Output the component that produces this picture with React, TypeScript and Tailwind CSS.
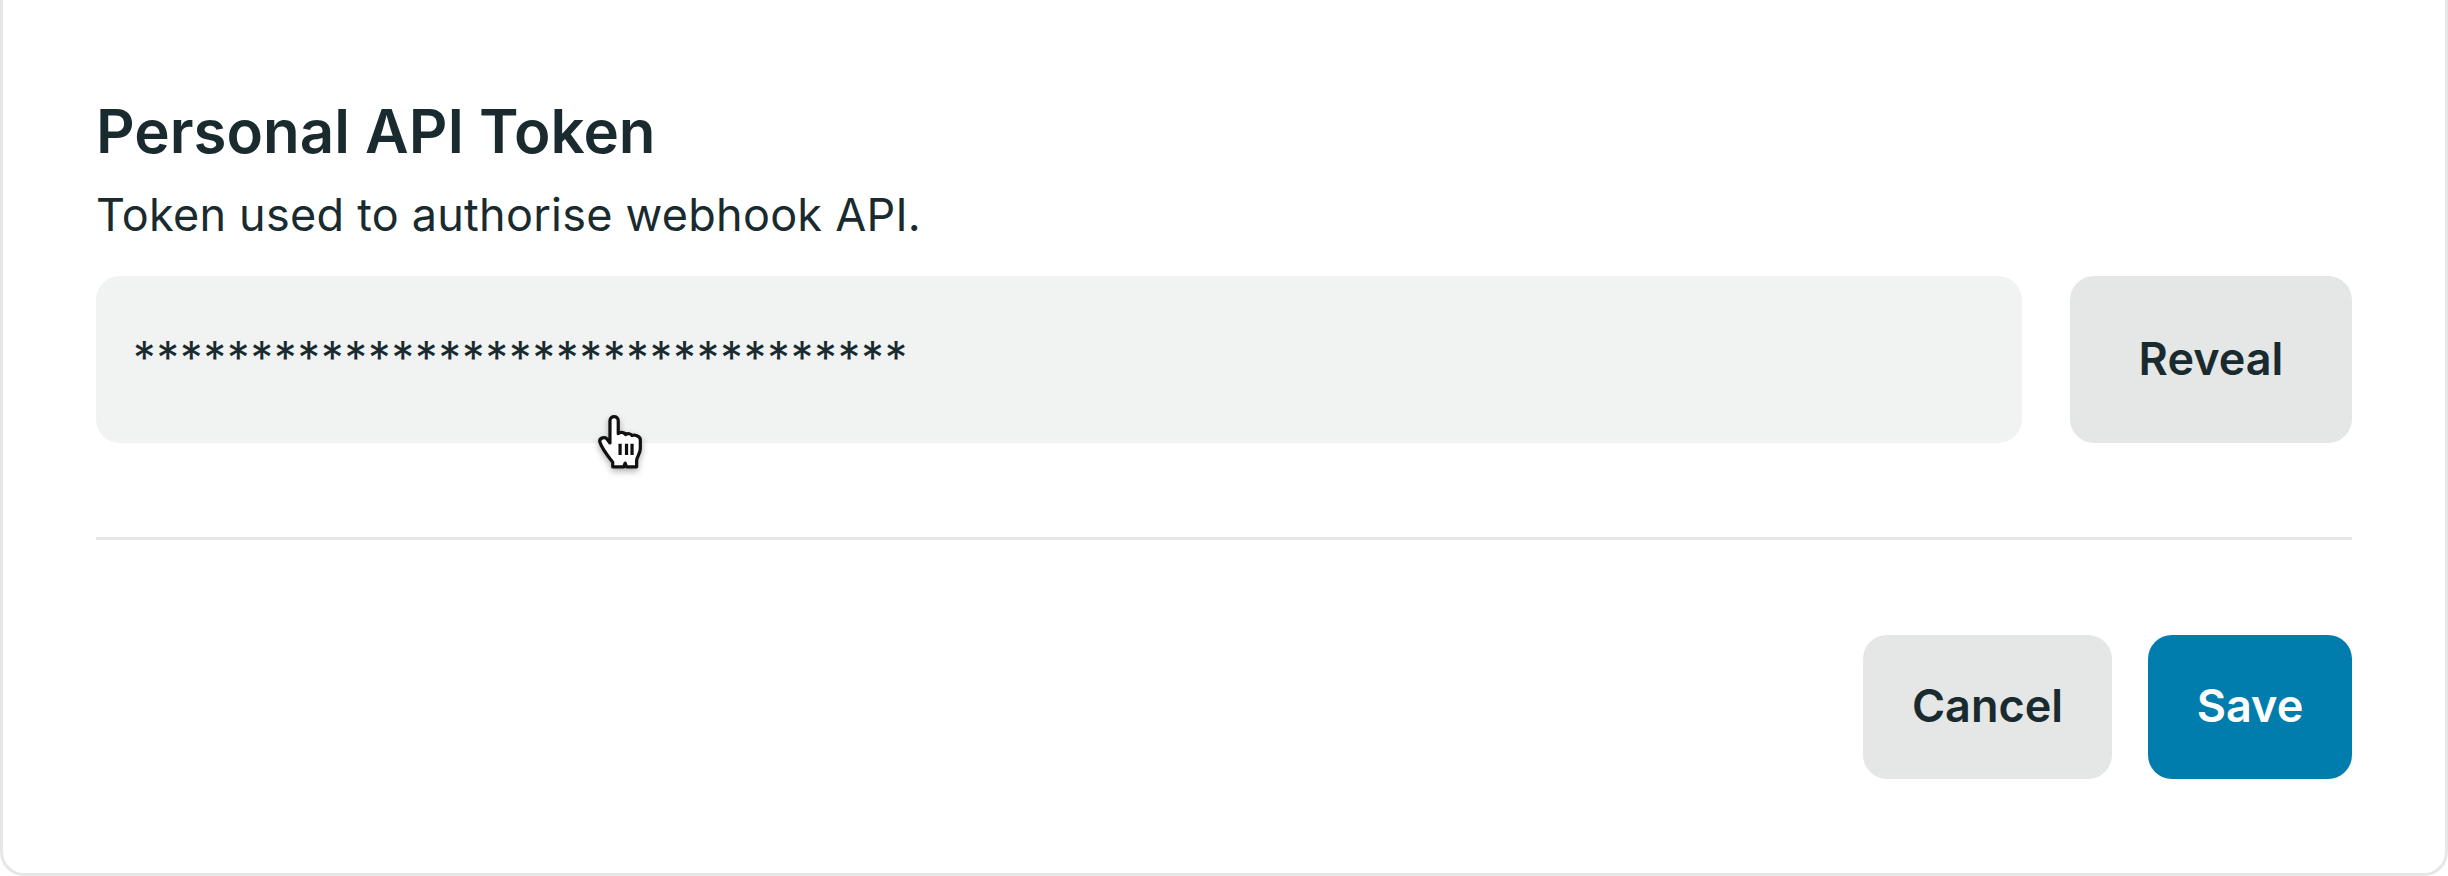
const stars = "*".repeat(33);

function HandCursor() {
  return (
    <svg className="absolute left-[598px] top-[411px] drop-shadow-[0_3px_3px_rgba(0,0,0,0.3)]" width="46" height="62" viewBox="0 0 50 62">
      <path
        d="M13 8c0-6 9-6 9 0v14c2-2 6-2 8 1 2-2 6-1 7 1 3-1 8 0 9 4v10c0 6-4 9-4 13v7H31l-1.5-4-1.5 4H16v-5C12 48 4 38 2 31c-1-5 6-6 8-3l3 4Z"
        fill="#fff"
        stroke="#111"
        strokeWidth="3.5"
        strokeLinejoin="round"
      />
      <path d="M24 33v12M31 33v12M37 33v12" stroke="#111" strokeWidth="3.5" />
    </svg>
  );
}

export default function App() {
  return (
    <div className="relative h-[876px] w-[2448px] overflow-hidden bg-white font-['Inter',sans-serif] text-[#1a2b2f]">
      <div className="flex h-[876px] flex-col rounded-b-[24px] border-x-[3px] border-b-[3px] border-[#e5e7e7] px-[93px] pt-[96px]">
        <h1 className="text-[60px] leading-[70px] font-semibold">Personal API Token</h1>
        <p className="mt-[24px] text-[45px] leading-[50px] tracking-[0.24px]">Token used to authorise webhook API.</p>
        <div className="mt-[36px] flex gap-[48px]">
          <div className="h-[167px] flex-1 rounded-[24px] bg-[#f1f3f3] px-[37px] pt-[57px] text-[45px] leading-[50px] tracking-[0.95px]">{stars}</div>
          <button className="h-[167px] w-[282px] rounded-[24px] bg-[#e5e7e7] pb-[2px] text-[45px] font-semibold">Reveal</button>
        </div>
        <div className="mt-[94px] h-[3px] bg-[#e5e7e7]" />
        <div className="mt-[95px] flex justify-end gap-[36px]">
          <button className="h-[144px] w-[249px] rounded-[24px] bg-[#e5e7e7] pb-[2px] text-[45px] font-semibold">Cancel</button>
          <button className="h-[144px] w-[204px] rounded-[24px] bg-[#007dac] pb-[2px] text-[45px] font-semibold text-white">Save</button>
        </div>
      </div>
      <HandCursor />
    </div>
  );
}
